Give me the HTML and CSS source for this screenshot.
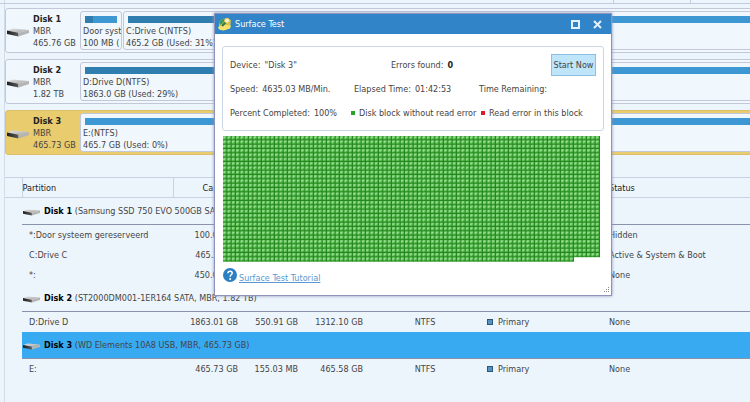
FILE: index.html
```
<!DOCTYPE html>
<html lang="en">
<head>
<meta charset="utf-8">
<title>Surface Test</title>
<link rel="stylesheet" href="styles.css">
</head>
<body>
<svg class="defs" aria-hidden="true">
  <defs>
    <linearGradient id="metal" x1="0" y1="0" x2="1" y2="1"><stop offset="0" stop-color="#e2e2e2"/><stop offset="1" stop-color="#a6a6a6"/></linearGradient>
    <linearGradient id="front" x1="0" y1="0" x2="1" y2="0"><stop offset="0" stop-color="#1e1e1e"/><stop offset="1" stop-color="#5a5a5a"/></linearGradient>
    <symbol id="drive" viewBox="0 0 22 9">
      <path d="M0 2.4 L6 0.6 L22 2 L11.5 4.8Z" fill="url(#metal)"/>
      <path d="M0 2.4 L11.5 4.8 V8.4 L0 6Z" fill="url(#front)"/>
      <path d="M11.5 4.8 L22 2 V5 L11.5 8.4Z" fill="#b4b4b4"/>
    </symbol>
  </defs>
</svg>
<main class="app">
  <div class="strip"><i></i><i></i></div>
  <section class="disks">
    <article class="disk">
      <svg class="drive"><use href="#drive"/></svg>
      <div class="info"><b>Disk 1</b><span>MBR</span><span>465.76 GB</span></div>
      <div class="part small"><div class="bar"><i style="width:26%"></i></div><span>Door syst</span><span>100 MB (</span></div>
      <div class="part"><div class="bar"><i style="width:31%"></i></div><span>C:Drive C(NTFS)</span><span>465.2 GB (Used: 31%)</span></div>
    </article>
    <article class="disk">
      <svg class="drive"><use href="#drive"/></svg>
      <div class="info"><b>Disk 2</b><span>MBR</span><span>1.82 TB</span></div>
      <div class="part"><div class="bar"><i style="width:29%"></i></div><span>D:Drive D(NTFS)</span><span>1863.0 GB (Used: 29%)</span></div>
    </article>
    <article class="disk chosen">
      <svg class="drive"><use href="#drive"/></svg>
      <div class="info"><b>Disk 3</b><span>MBR</span><span>465.73 GB</span></div>
      <div class="part"><div class="bar"><i style="width:0%"></i></div><span>E:(NTFS)</span><span>465.7 GB (Used: 0%)</span></div>
    </article>
  </section>
  <table class="list">
    <colgroup><col class="c-gutter"><col class="c-name"><col class="c-cap"><col class="c-used"><col class="c-free"><col class="c-fs"><col class="c-type"><col></colgroup>
    <thead>
      <tr><th></th><th class="name">Partition</th><th class="num">Capacity</th><th class="num">Used</th><th class="num">Unused</th><th class="fs">File System</th><th>Type</th><th>Status</th></tr>
    </thead>
    <tbody>
      <tr class="group"><td></td><td colspan="7"><svg class="drive"><use href="#drive"/></svg><b>Disk 1</b> (Samsung SSD 750 EVO 500GB SATA, MBR, 465.76 GB)</td></tr>
      <tr><td></td><td>*:Door systeem gereserveerd</td><td class="num">100.00 MB</td><td></td><td></td><td></td><td></td><td>Hidden</td></tr>
      <tr><td></td><td>C:Drive C</td><td class="num">465.22 GB</td><td></td><td></td><td></td><td></td><td>Active &amp; System &amp; Boot</td></tr>
      <tr><td></td><td>*:</td><td class="num">450.00 MB</td><td></td><td></td><td></td><td></td><td>None</td></tr>
      <tr class="group"><td></td><td colspan="7"><svg class="drive"><use href="#drive"/></svg><b>Disk 2</b> (ST2000DM001-1ER164 SATA, MBR, 1.82 TB)</td></tr>
      <tr><td></td><td>D:Drive D</td><td class="num">1863.01 GB</td><td class="num">550.91 GB</td><td class="num">1312.10 GB</td><td class="fs">NTFS</td><td><i class="kind"></i>Primary</td><td>None</td></tr>
      <tr class="group active"><td></td><td colspan="7"><svg class="drive"><use href="#drive"/></svg><b>Disk 3</b> (WD Elements 10A8 USB, MBR, 465.73 GB)</td></tr>
      <tr><td></td><td>E:</td><td class="num">465.73 GB</td><td class="num">155.03 MB</td><td class="num">465.58 GB</td><td class="fs">NTFS</td><td><i class="kind"></i>Primary</td><td>None</td></tr>
    </tbody>
  </table>
</main>

<div class="dialog" role="dialog" aria-labelledby="title">
  <header class="titlebar">
    <svg class="logo" viewBox="0 0 14 14">
      <path d="M1 5 L5 1.5 L13 3 L12 11 L6 13.5 L1 11Z" fill="#d9c445"/>
      <path d="M1 5 L5 1.5 L8 2 L5 6 L2 8Z" fill="#3f9a62"/>
      <path d="M0 10 L5 8 L13 8.5 L12 11.5 L5 13.5 L1 12.5Z" fill="#f5e36c"/>
      <path d="M4 9 L8 5" stroke="#35724a" stroke-width="2"/>
      <circle cx="9" cy="3.6" r="2.4" fill="#fbf6cf" stroke="#e0c25a"/>
    </svg>
    <h1 id="title">Surface Test</h1>
    <button class="win" aria-label="Maximize"><svg viewBox="0 0 9 9"><rect x="1" y="1" width="7" height="7" fill="none" stroke="#e4f1fb" stroke-width="2"/></svg></button>
    <button class="win" aria-label="Close"><svg viewBox="0 0 9 9"><path d="M1 1 L8 8 M8 1 L1 8" stroke="#e4f1fb" stroke-width="2"/></svg></button>
  </header>
  <div class="content">
    <section class="stats">
      <div class="row"><p>Device:<span>"Disk 3"</span></p><p class="errors">Errors found:<b>0</b></p><button class="start">Start Now</button></div>
      <div class="row"><p>Speed:<span>4635.03 MB/Min.</span></p><p class="elapsed">Elapsed Time:<span>01:42:53</span></p><p>Time Remaining:</p></div>
      <div class="row"><p>Percent Completed:<span>100%</span></p><p><i class="ok"></i>Disk block without read error</p><p><i class="bad"></i>Read error in this block</p></div>
    </section>
    <svg class="blocks" viewBox="0 0 1044 348" role="img" aria-label="Tested disk blocks">
      <defs>
        <pattern id="block" width="12" height="12" patternUnits="userSpaceOnUse">
          <rect width="12" height="12" fill="#23861d"/>
          <rect width="9" height="9" fill="#55bd4c"/>
          <path d="M1 1H8V4H4V8H1Z" fill="#a8e6a1"/>
        </pattern>
      </defs>
      <path d="M0 0H1044V336H972V348H0Z" fill="url(#block)"/>
    </svg>
    <a class="help" href="#tutorial">
      <svg viewBox="0 0 14 14"><circle cx="7" cy="7" r="7" fill="#2c7fc3"/><path d="M4.9 5.3 C4.9 2.4 9.3 2.5 9.2 5.2 C9.1 6.8 7.1 6.8 7.1 8.8" fill="none" stroke="#fff" stroke-width="1.5"/><circle cx="7.1" cy="10.9" r="1" fill="#fff"/></svg>
      <span>Surface Test Tutorial</span>
    </a>
  </div>
  <svg class="grip" viewBox="0 0 6 6"><path d="M5 0h1v1h-1z M5 2h1v1h-1z M5 4h1v1h-1z M3 2h1v1h-1z M3 4h1v1h-1z M1 4h1v1h-1z" fill="#8c8c8c"/></svg>
</div>
</body>
</html>
```
FILE: styles.css
```
* { box-sizing: border-box; }
body {
  margin: 0;
  min-height: 100vh;
  overflow: hidden;
  background: #edf5fc;
  color: #444;
  font: 9px/12px Tahoma, "DejaVu Sans Condensed", sans-serif;
}
.defs { position: absolute; width: 0; height: 0; }
h1, p { margin: 0; font: inherit; }
button { font: inherit; color: inherit; padding: 0; }
b { color: #222; }

.app {
  margin-left: 4px;
  min-height: 100vh;
  border-left: 1px solid #d3dcea;
}
.strip {
  display: flex;
  justify-content: flex-end;
  height: 4px;
  margin-left: -5px;
  padding-right: 59px;
  border-bottom: 1px solid #c3cddd;
}
.strip i { width: 77px; border-left: 1px solid #c3cddd; }
.strip i:last-child { width: 1px; }

.disks {
  display: flex;
  flex-direction: column;
  gap: 6px;
  padding-top: 4px;
}
.disk {
  display: flex;
  align-items: center;
  margin-right: -8px;
  padding: 2px 2px 2px 1px;
  border: 1px solid #c3c7d9;
  border-radius: 3px;
  background: #f0f7fd;
}
.drive { flex: none; width: 22px; height: 9px; }
.disk .drive { margin-top: 4px; }
.info {
  display: flex;
  flex-direction: column;
  flex: none;
  width: 45px;
  margin: 0 2px 0 4px;
  white-space: nowrap;
}
.chosen { background: #e8cc6e; border-color: #dcc069; }
.part {
  flex: 1;
  display: flex;
  flex-direction: column;
  min-width: 0;
  padding: 4px 2px 0 2px;
  overflow: hidden;
  white-space: nowrap;
  border: 1px solid #c3c7d9;
  border-radius: 3px;
  background: #f0f7fd;
}
.part.small { flex: none; width: 42px; margin-right: 1px; }
.bar { height: 7px; margin: 0 2px 2px; background: #3d97d3; }
.bar i { display: block; height: 100%; background: #307db0; }

.list {
  width: 100%;
  margin-top: 22px;
  table-layout: fixed;
  border-collapse: collapse;
  white-space: nowrap;
}
.c-gutter { width: 17px; }
.c-name { width: 151px; }
.c-cap { width: 72px; }
.c-used { width: 60px; }
.c-free { width: 65px; }
.c-fs { width: 110px; }
.c-type { width: 122px; }
th {
  height: 20px;
  padding: 0 7px;
  border-top: 1px solid #c9d2e2;
  border-bottom: 1px solid #c9d2e2;
  color: #222;
  font-weight: normal;
  text-align: left;
}
th.name {
  padding-left: 0;
  border-left: 1px solid #c9d2e2;
  border-right: 1px solid #c9d2e2;
}
td { height: 20px; padding: 0 7px; }
.num { text-align: right; }
.fs { text-align: center; }
.group td { height: 27px; padding: 0; }
.group td + td { border-bottom: 1px solid #8a93ab; }
.group .drive { width: 17px; height: 7px; margin: 0 4px 0 1px; vertical-align: -2px; }
.group b { color: #000; }
.active td + td { background: #38aaf2; }
.kind {
  display: inline-block;
  width: 6px;
  height: 6px;
  margin-right: 5px;
  border: 1px solid #2b5877;
  background: #4f93c8;
}

.dialog {
  position: absolute;
  top: 14px;
  left: 215px;
  width: 396px;
  padding-bottom: 10px;
  background: #fff;
  outline: 1px solid #8d93bb;
  box-shadow: 0 0 3px 1px #8d93bb;
}
.titlebar {
  display: flex;
  align-items: center;
  height: 20px;
  padding: 0 8px 0 3px;
  background: #3184c8;
  color: #fff;
}
.logo { width: 14px; height: 14px; margin-right: 3px; }
.titlebar h1 { flex: 1; }
.win {
  width: 10px;
  height: 10px;
  margin-left: 12px;
  border: 0;
  background: none;
}
.win svg { display: block; width: 9px; height: 9px; }
.content { padding: 12px 7px 0; }
.stats {
  padding: 6px 7px 5px;
  border: 1px solid #cbd6e6;
  border-radius: 3px;
  white-space: nowrap;
}
.row {
  display: grid;
  grid-template-columns: 121px 128px 1fr;
  align-items: center;
  height: 24px;
}
.row span, .row p b { margin-left: 4px; }
.errors { padding-left: 40px; }
.elapsed { padding-left: 3px; }
.start {
  justify-self: end;
  width: 45px;
  height: 22px;
  border: 1px solid #8cbfe0;
  background: #bfe5fb;
}
.ok, .bad {
  display: inline-block;
  width: 4px;
  height: 4px;
  margin-right: 4px;
  vertical-align: 1px;
  background: #28a428;
}
.bad { margin-left: 2px; background: #d81e28; }
.blocks { display: block; width: calc(100% - 5px); margin: 5px 0 0 1px; }
.help {
  display: inline-flex;
  align-items: flex-end;
  gap: 2px;
  margin: 6px 0 0 1px;
  color: #5b97d2;
}
.help svg { width: 14px; height: 14px; margin-bottom: 2px; }
.grip { position: absolute; right: 2px; bottom: 2px; width: 6px; height: 6px; }
```
